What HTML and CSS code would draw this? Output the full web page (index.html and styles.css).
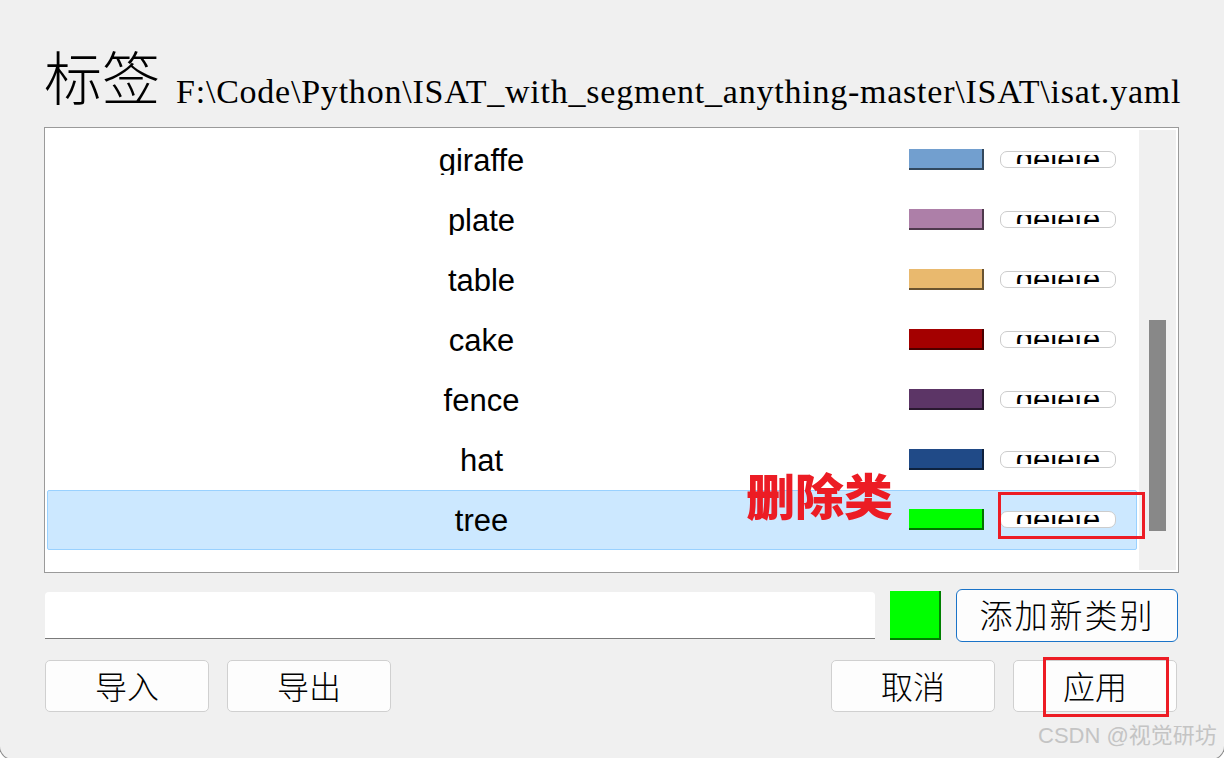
FILE: index.html
```html
<!DOCTYPE html>
<html lang="zh">
<head>
<meta charset="utf-8">
<title>标签</title>
<link rel="stylesheet" href="styles.css">
</head>
<body>
<div class="window">
  <div class="title"><span class="title-cn">标签</span><span class="path">F:\Code\Python\ISAT_with_segment_anything-master\ISAT\isat.yaml</span></div>

  <div class="list">
    <div class="rows">
      <div class="row"><span class="label">giraffe</span><span class="swatch" style="background:#729fcf"></span><span class="del"><span class="del-text">delete</span></span></div>
      <div class="row"><span class="label">plate</span><span class="swatch" style="background:#ad7fa8"></span><span class="del"><span class="del-text">delete</span></span></div>
      <div class="row"><span class="label">table</span><span class="swatch" style="background:#e9b96e"></span><span class="del"><span class="del-text">delete</span></span></div>
      <div class="row"><span class="label">cake</span><span class="swatch" style="background:#a40000"></span><span class="del"><span class="del-text">delete</span></span></div>
      <div class="row"><span class="label">fence</span><span class="swatch" style="background:#5c3566"></span><span class="del"><span class="del-text">delete</span></span></div>
      <div class="row"><span class="label">hat</span><span class="swatch" style="background:#204a87"></span><span class="del"><span class="del-text">delete</span></span></div>
      <div class="row selected"><span class="label">tree</span><span class="swatch" style="background:#00ff00"></span><span class="del"><span class="del-text">delete</span></span></div>
    </div>
    <div class="scrollbar"><div class="thumb"></div></div>
  </div>

  <div class="add-row">
    <div class="input"></div>
    <span class="swatch-big"></span>
    <button class="btn btn-primary">添加新类别</button>
  </div>

  <div class="actions">
    <div class="group group-left">
      <button class="btn">导入</button>
      <button class="btn">导出</button>
    </div>
    <div class="group group-right">
      <button class="btn">取消</button>
      <button class="btn">应用</button>
    </div>
  </div>

  <div class="note">删除类</div>
  <div class="mark mark-del"></div>
  <div class="mark mark-apply"></div>
  <div class="watermark">CSDN @视觉研坊</div>
</div>
</body>
</html>
```

FILE: styles.css
```css
html, body {
  margin: 0;
  padding: 0;
  height: 758px;
  overflow: hidden;
  background: #ffffff;
}

.window {
  position: relative;
  box-sizing: border-box;
  width: 1226px;
  height: 760px;
  margin-left: -1px;
  padding: 0 45px 0 44px;
  background: #f0f0f0;
  border: 1px solid #8a8a8a;
  border-top: none;
  border-radius: 0 0 14px 14px;
  font-family: "Noto Sans CJK SC", sans-serif;
  color: #000;
}

.title {
  box-sizing: border-box;
  height: 127px;
  padding-top: 40px;
  font-family: "Noto Sans CJK SC", sans-serif;
  font-size: 58px;
  line-height: 70px;
  white-space: nowrap;
}

.title-cn {
  font-weight: 300;
}

.path {
  margin-left: 16px;
  vertical-align: -3px;
  font-family: "Liberation Serif", "Times New Roman", serif;
  font-size: 34px;
  letter-spacing: 0.77px;
}

.list {
  display: flex;
  gap: 2px;
  box-sizing: border-box;
  height: 446px;
  padding: 2px;
  background: #ffffff;
  border: 1px solid #9a9a9a;
}

.rows {
  width: 1090px;
}

.row {
  display: flex;
  align-items: flex-start;
  box-sizing: border-box;
  height: 60px;
  border: 1px solid transparent;
  border-radius: 2px;
}

.row.selected {
  background: #cce8ff;
  border-color: #99d1ff;
}

.label {
  display: block;
  box-sizing: border-box;
  width: 861px;
  height: 44px;
  padding-left: 6px;
  overflow: hidden;
  text-align: center;
  font-family: "Liberation Sans", Arial, sans-serif;
  font-size: 31px;
  line-height: 60px;
}

.swatch {
  display: block;
  box-sizing: border-box;
  width: 75px;
  height: 21px;
  margin-top: 18px;
  box-shadow: inset -2px -2px 0 rgba(0, 0, 0, 0.55);
}

.del {
  display: block;
  box-sizing: border-box;
  width: 116px;
  height: 17px;
  margin: 20px 0 0 16px;
  background: #ffffff;
  border: 1px solid #cccccc;
  border-radius: 7px;
}

.del-text {
  display: block;
  height: 9px;
  margin-top: 3px;
  overflow: hidden;
  text-align: center;
  font-family: "Liberation Sans", Arial, sans-serif;
  font-size: 31px;
  line-height: 10px;
}

.scrollbar {
  width: 37px;
  background: #f0f0f0;
}

.thumb {
  width: 17px;
  height: 211px;
  margin: 190px 0 0 10px;
  background: #888888;
}

.add-row {
  display: flex;
  align-items: center;
  height: 53px;
  margin-top: 16px;
}

.input {
  box-sizing: border-box;
  width: 830px;
  height: 47px;
  margin-left: 1px;
  background: #ffffff;
  border-bottom: 1px solid #7a7a7a;
  border-radius: 4px 4px 0 0;
}

.swatch-big {
  display: block;
  box-sizing: border-box;
  width: 51px;
  height: 49px;
  margin-left: 15px;
  background: #00ff00;
  box-shadow: inset -2px -2px 0 rgba(0, 0, 0, 0.5);
}

.btn {
  box-sizing: border-box;
  width: 164px;
  height: 52px;
  padding: 0 0 3px;
  background: #fdfdfd;
  border: 1px solid #d0d0d0;
  border-radius: 5px;
  font-family: "Noto Sans CJK SC", sans-serif;
  font-weight: 300;
  font-size: 32px;
  line-height: 1;
  color: #000;
}

.btn-primary {
  width: 222px;
  height: 53px;
  margin-left: 15px;
  border-color: #1a73c8;
  border-radius: 6px;
  font-size: 33px;
  letter-spacing: 2px;
}

.actions {
  display: flex;
  justify-content: space-between;
  margin-top: 18px;
}

.group {
  display: flex;
  gap: 18px;
}

.group-left {
  margin-left: 1px;
}

.group-right {
  margin-right: 2px;
}

.note {
  position: absolute;
  left: 746px;
  top: 469px;
  font-family: "Noto Sans CJK SC", sans-serif;
  font-weight: 900;
  font-size: 49px;
  line-height: 1;
  color: #ec1c24;
}

.mark {
  position: absolute;
  box-sizing: border-box;
  border: 3px solid #ed1c24;
}

.mark-del {
  left: 998px;
  top: 492px;
  width: 147px;
  height: 47px;
}

.mark-apply {
  left: 1043px;
  top: 657px;
  width: 126px;
  height: 60px;
}

.watermark {
  position: absolute;
  left: 1038px;
  top: 725px;
  font-family: "Liberation Sans", "Noto Sans CJK SC", sans-serif;
  font-size: 22px;
  line-height: 1;
  color: #c4c4c4;
  white-space: nowrap;
}
```
